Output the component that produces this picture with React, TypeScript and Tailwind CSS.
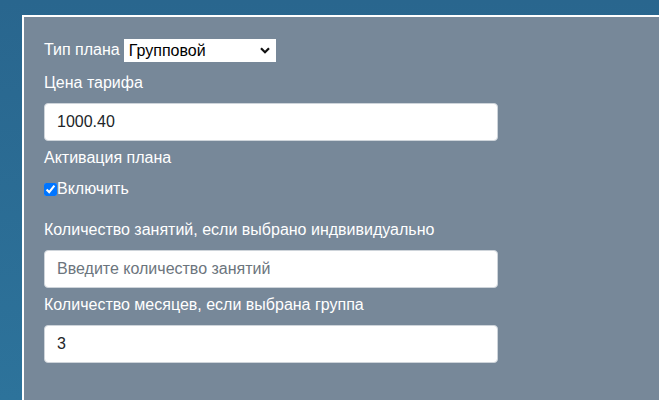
export default function App() {
  return (
    <div className="h-screen w-full overflow-hidden bg-gradient-to-b from-[#29668e] to-[#2d739b] pl-[22px] pt-[15px] font-['Segoe_UI','Liberation_Sans',sans-serif] text-base">
      <form className="h-[420px] w-[680px] border-2 border-white bg-[#778899] px-[20px] pt-[21px] text-white">
        <div className="flex h-6 items-center leading-6">
          <label htmlFor="plan-type">Тип плана</label>
          <div className="relative ml-1 h-[23px] w-[152px]">
            <select
              id="plan-type"
              defaultValue="group"
              className="h-full w-full appearance-none bg-white pl-[5px] text-base leading-[23px] text-black outline-none"
            >
              <option value="individual">Индивидуальный</option>
              <option value="group">Групповой</option>
            </select>
            <svg
              className="pointer-events-none absolute right-[6px] top-[8px]"
              width="10"
              height="7"
              viewBox="0 0 10 7"
              fill="none"
            >
              <path d="M1 1.2 5 5.2 9 1.2" stroke="#111" strokeWidth="2.2" />
            </svg>
          </div>
        </div>

        <label className="mt-[9px] mb-2 block leading-6">Цена тарифа</label>
        <input
          type="text"
          defaultValue="1000.40"
          className="block h-[38px] w-[454px] rounded-[4px] border border-[#ced4da] bg-white px-3 text-[#212529] outline-none"
        />

        <p className="mt-[5px] leading-6">Активация плана</p>
        <label className="mt-[7px] flex h-6 items-center leading-6">
          <input type="checkbox" defaultChecked className="m-0 h-[13px] w-[13px] accent-[#0075ff]" />
          <span>Включить</span>
        </label>

        <label className="mt-[17px] mb-2 block leading-6">
          Количество занятий, если выбрано индвивидуально
        </label>
        <input
          type="text"
          placeholder="Введите количество занятий"
          className="block h-[38px] w-[454px] rounded-[4px] border border-[#ced4da] bg-white px-3 text-[#212529] outline-none placeholder:text-[#6c757d]"
        />

        <label className="mt-[5px] mb-2 block leading-6">
          Количество месяцев, если выбрана группа
        </label>
        <input
          type="text"
          defaultValue="3"
          className="block h-[38px] w-[454px] rounded-[4px] border border-[#ced4da] bg-white px-3 text-[#212529] outline-none"
        />
      </form>
    </div>
  );
}
